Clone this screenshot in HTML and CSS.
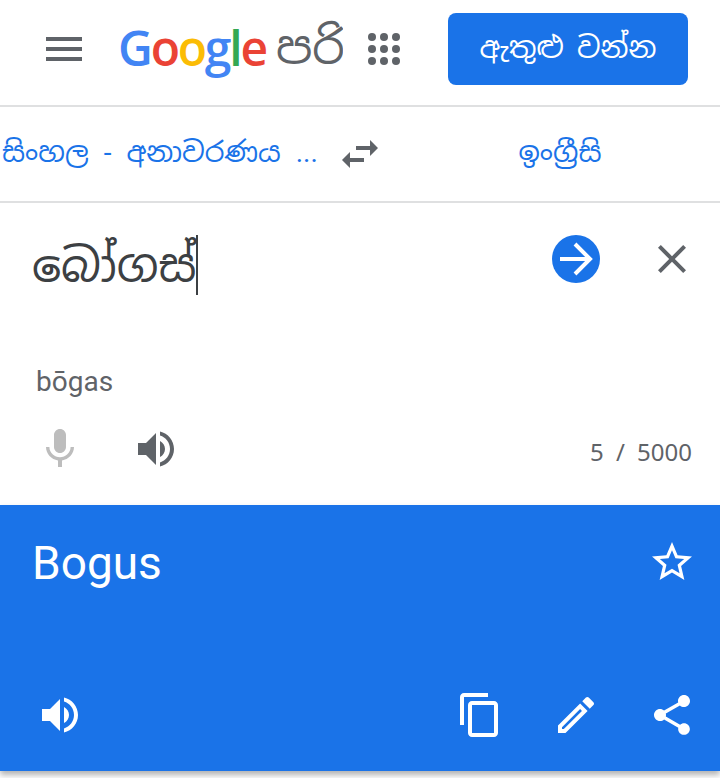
FILE: index.html
```html
<!DOCTYPE html>
<html lang="si">
<head>
  <meta charset="UTF-8">
  <meta name="viewport" content="width=device-width, initial-scale=1.0">
  <title>Google පරිවර්තනය</title>
  <link rel="stylesheet" href="styles.css">
</head>
<body>

  <header class="topbar">
    <button class="icon-btn menu-btn" aria-label="menu">
      <svg viewBox="0 0 24 24"><path d="M3 18h18v-2H3v2zm0-5h18v-2H3v2zm0-7v2h18V6H3z"/></svg>
    </button>
    <div class="brand">
      <span class="logo"><span class="c-blue">G</span><span class="c-red">o</span><span class="c-yellow">o</span><span class="c-blue">g</span><span class="c-green">l</span><span class="c-red">e</span></span>
      <span class="product">පරි</span>
    </div>
    <button class="icon-btn apps-btn" aria-label="apps">
      <svg viewBox="0 0 32 32">
        <circle cx="4" cy="4" r="4"/><circle cx="16" cy="4" r="4"/><circle cx="28" cy="4" r="4"/>
        <circle cx="4" cy="16" r="4"/><circle cx="16" cy="16" r="4"/><circle cx="28" cy="16" r="4"/>
        <circle cx="4" cy="28" r="4"/><circle cx="16" cy="28" r="4"/><circle cx="28" cy="28" r="4"/>
      </svg>
    </button>
    <a class="signin" href="#">ඇතුළු වන්න</a>
  </header>

  <nav class="langs">
    <span class="lang lang-from">සිංහල - අනාවරණය ...</span>
    <button class="icon-btn" aria-label="swap">
      <svg viewBox="0 0 24 24"><path d="M6.99 11L3 15l3.99 4v-3H14v-2H6.99v-3zM21 9l-3.99-4v3H10v2h7.01v3L21 9z"/></svg>
    </button>
    <span class="lang lang-to">ඉංග්‍රීසි</span>
  </nav>

  <section class="source">
    <div class="source-top">
      <p class="source-text">බෝගස්<span class="caret"></span></p>
      <button class="icon-btn go-btn" aria-label="translate">
        <svg viewBox="0 0 48 48"><circle cx="24" cy="24" r="24"/><path class="go-arrow" d="M8 24h30M23 9l15 15-15 15"/></svg>
      </button>
      <button class="icon-btn close-btn" aria-label="clear">
        <svg viewBox="0 0 24 24"><path d="M19 6.41L17.59 5 12 10.59 6.41 5 5 6.41 10.59 12 5 17.59 6.41 19 12 13.41 17.59 19 19 17.59 13.41 12z"/></svg>
      </button>
    </div>
    <p class="translit">bōgas</p>
    <div class="source-tools">
      <button class="icon-btn mic-btn" aria-label="mic">
        <svg viewBox="0 0 24 24"><path d="M12 14c1.66 0 2.99-1.34 2.99-3L15 5c0-1.66-1.34-3-3-3S9 3.34 9 5v6c0 1.66 1.34 3 3 3zm5.3-3c0 3-2.54 5.1-5.3 5.1S6.7 14 6.7 11H5c0 3.41 2.72 6.23 6 6.72V21h2v-3.28c3.28-.48 6-3.3 6-6.72h-1.7z"/></svg>
      </button>
      <button class="icon-btn" aria-label="listen">
        <svg viewBox="0 0 24 24"><path d="M3 9v6h4l5 5V4L7 9H3zm13.5 3c0-1.77-1.02-3.29-2.5-4.03v8.05c1.48-.73 2.5-2.25 2.5-4.02zM14 3.23v2.06c2.89.86 5 3.54 5 6.71s-2.11 5.85-5 6.71v2.06c4.01-.91 7-4.49 7-8.77s-2.99-7.86-7-8.77z"/></svg>
      </button>
      <span class="counter">5 / 5000</span>
    </div>
  </section>

  <section class="result">
    <div class="result-top">
      <p class="result-text">Bogus</p>
      <button class="icon-btn star-btn" aria-label="save">
        <svg viewBox="0 0 24 24"><path d="M22 9.24l-7.19-.62L12 2 9.19 8.63 2 9.24l5.46 4.73L5.82 21 12 17.27 18.18 21l-1.63-7.03L22 9.24zM12 15.4l-3.76 2.27 1-4.28-3.32-2.88 4.38-.38L12 6.1l1.71 4.04 4.38.38-3.32 2.88 1 4.28L12 15.4z"/></svg>
      </button>
    </div>
    <div class="result-tools">
      <button class="icon-btn" aria-label="listen">
        <svg viewBox="0 0 24 24"><path d="M3 9v6h4l5 5V4L7 9H3zm13.5 3c0-1.77-1.02-3.29-2.5-4.03v8.05c1.48-.73 2.5-2.25 2.5-4.02zM14 3.23v2.06c2.89.86 5 3.54 5 6.71s-2.11 5.85-5 6.71v2.06c4.01-.91 7-4.49 7-8.77s-2.99-7.86-7-8.77z"/></svg>
      </button>
      <div class="result-actions">
        <button class="icon-btn" aria-label="copy">
          <svg viewBox="0 0 24 24"><path d="M16 1H4c-1.1 0-2 .9-2 2v14h2V3h12V1zm3 4H8c-1.1 0-2 .9-2 2v14c0 1.1.9 2 2 2h11c1.1 0 2-.9 2-2V7c0-1.1-.9-2-2-2zm0 16H8V7h11v14z"/></svg>
        </button>
        <button class="icon-btn" aria-label="edit">
          <svg viewBox="0 0 24 24"><path d="M14.06 9.02l.92.92L5.92 19H5v-.92l9.06-9.06M17.66 3c-.25 0-.51.1-.7.29l-1.83 1.83 3.75 3.75 1.83-1.83c.39-.39.39-1.02 0-1.41l-2.34-2.34c-.2-.2-.45-.29-.71-.29zm-3.6 3.19L3 17.25V21h3.75L17.81 9.94l-3.75-3.75z"/></svg>
        </button>
        <button class="icon-btn" aria-label="share">
          <svg viewBox="0 0 24 24"><path d="M18 16.08c-.76 0-1.44.3-1.96.77L8.91 12.7c.05-.23.09-.46.09-.7s-.04-.47-.09-.7l7.05-4.11c.54.5 1.25.81 2.04.81 1.66 0 3-1.34 3-3s-1.34-3-3-3-3 1.34-3 3c0 .24.04.47.09.7L8.04 9.81C7.5 9.31 6.79 9 6 9c-1.66 0-3 1.34-3 3s1.34 3 3 3c.79 0 1.5-.31 2.04-.81l7.12 4.16c-.05.21-.08.43-.08.65 0 1.61 1.31 2.92 2.92 2.92 1.61 0 2.92-1.31 2.92-2.92s-1.31-2.92-2.92-2.92z"/></svg>
        </button>
      </div>
    </div>
  </section>

</body>
</html>
```

FILE: styles.css
```css
* {
  box-sizing: border-box;
}
body {
  margin: 0;
  height: 778px;
  overflow: hidden;
  background-color: #fff;
  color: #3c4043;
  font-family: Roboto, "Noto Sans", "Noto Sans Sinhala", sans-serif;
}
p {
  margin: 0;
}

.icon-btn {
  flex: none;
  width: 48px;
  height: 48px;
  padding: 0;
  border: 0;
  background: none;
  fill: #5f6368;
  svg {
    display: block;
    width: 48px;
    height: 48px;
  }
}

/* barra superior */
.topbar {
  display: flex;
  align-items: center;
  height: 107px;
  padding: 0 32px 7px 40px;
  border-bottom: 2px solid #dfe0e1;
}
.brand {
  flex: none;
  display: flex;
  align-items: center;
  gap: 10px;
  width: 225px;
  margin-left: 30px;
  overflow: hidden;
  white-space: nowrap;
}
.logo {
  margin-bottom: 4px;
  font-family: "Open Sans", sans-serif;
  font-size: 48px;
  font-weight: 600;
  letter-spacing: -2.2px;
}
.c-blue { color: #4285f4; }
.c-red { color: #ea4335; }
.c-yellow { color: #fbbc05; }
.c-green { color: #34a853; }
.product {
  margin-bottom: 4px;
  font-size: 46px;
  color: #5f6368;
}
.apps-btn {
  margin-left: 17px;
  svg {
    width: 32px;
    height: 32px;
    margin: 8px;
  }
}
.signin {
  flex: none;
  display: flex;
  align-items: center;
  justify-content: center;
  width: 240px;
  height: 72px;
  margin-left: 40px;
  padding-bottom: 4px;
  border-radius: 8px;
  background-color: #1a73e8;
  color: #fff;
  font-size: 29px;
  word-spacing: 6px;
  text-decoration: none;
}

/* idiomas */
.langs {
  display: flex;
  align-items: center;
  height: 96px;
  border-bottom: 2px solid #dfe0e1;
}
.lang {
  padding-bottom: 5px;
  color: #1a73e8;
  font-size: 28px;
  white-space: nowrap;
}
.lang-from {
  width: 336px;
  padding-left: 2px;
  word-spacing: 8px;
}
.lang-to {
  flex: 1;
  padding-left: 16px;
  text-align: center;
}

/* texto origen */
.source {
  height: 302px;
  padding: 32px 24px 0 32px;
}
.source-top {
  display: flex;
  align-items: flex-start;
  height: 130px;
}
.source-text {
  flex: 1;
  display: flex;
  align-items: center;
  height: 60px;
  font-size: 46px;
}
.caret {
  width: 2px;
  height: 60px;
  background-color: #3c4043;
}
.go-btn {
  fill: #1a73e8;
  .go-arrow {
    fill: none;
    stroke: #fff;
    stroke-width: 4;
  }
}
.close-btn {
  margin-left: 48px;
}
.translit {
  padding-left: 4px;
  color: #5f6368;
  font-size: 28px;
  line-height: 34px;
}
.source-tools {
  display: flex;
  align-items: center;
  margin: 26px 0 0 4px;
  gap: 48px;
}
.mic-btn {
  fill: #bdbdbd;
}
.counter {
  margin: 4px 4px 0 auto;
  color: #5f6368;
  font-family: "Noto Sans", sans-serif;
  font-size: 24px;
  word-spacing: 6px;
}

/* resultado */
.result {
  height: 266px;
  padding: 32px 24px 0 32px;
  background-color: #1a73e8;
  color: #fff;
  box-shadow: 0 4px 6px rgba(0, 0, 0, 0.3);
  .icon-btn {
    fill: #fff;
  }
  .star-btn {
    margin-top: 1px;
  }
}
.result-top {
  display: flex;
  justify-content: space-between;
  height: 154px;
}
.result-text {
  font-size: 46px;
  line-height: 52px;
}
.result-tools {
  display: flex;
  justify-content: space-between;
  margin-left: 4px;
}
.result-actions {
  display: flex;
  gap: 48px;
}
```
